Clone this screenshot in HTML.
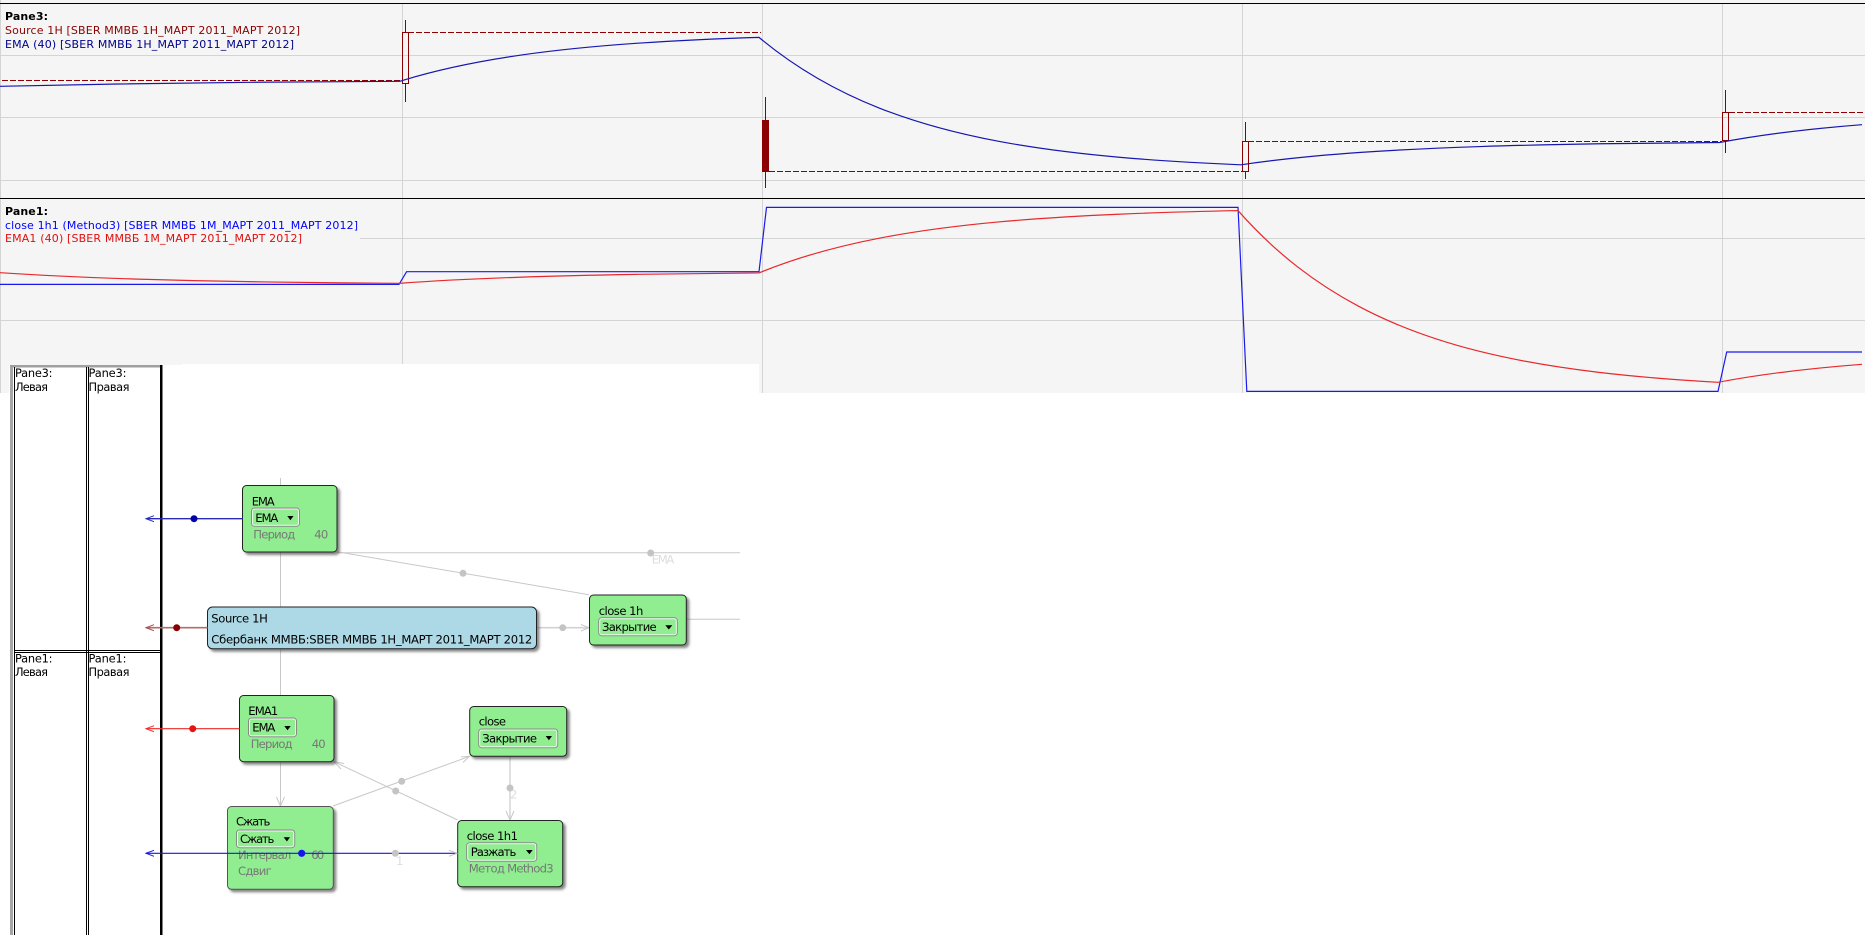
<!DOCTYPE html>
<html>
<head>
<meta charset="utf-8">
<title>Chart</title>
<style>
html,body{margin:0;padding:0;background:#fff;width:1865px;height:942px;overflow:hidden}
svg{display:block}
text{font-family:"DejaVu Sans","Liberation Sans",sans-serif;font-size:11px}
.n{font-size:11.6px;fill:#000}
.p{font-size:11.6px;fill:#777}
.l{font-size:11.6px;fill:#ddd}
.t{font-size:11.4px;fill:#000}
.g{stroke:#d4d4d4;stroke-width:1;shape-rendering:crispEdges}
.c{stroke:#8b0000;stroke-width:1;fill:none;shape-rendering:crispEdges}
.d{stroke:#8b0000;stroke-width:1;stroke-dasharray:6 2;fill:none;shape-rendering:crispEdges}
.w{stroke:#c8c8c8;stroke-width:1;fill:none}
.k{stroke:#000;stroke-width:1;shape-rendering:crispEdges}
.node{fill:#90ee90;stroke:#222;stroke-width:1;filter:url(#s)}
.dd{fill:#90ee90;stroke:#888;stroke-width:1}
.di{fill:none;stroke:#f0f5f0;stroke-width:1}
</style>
</head>
<body>
<svg xmlns="http://www.w3.org/2000/svg" width="1865" height="942" viewBox="0 0 1865 942">
<defs>
<filter id="s" x="-10%" y="-10%" width="125%" height="125%">
<feDropShadow dx="2.5" dy="2.5" stdDeviation="1.3" flood-color="#444" flood-opacity="0.65"/>
</filter>
</defs>

<!-- chart background -->
<rect x="0" y="0" width="1865" height="393" fill="#f5f5f5"/>
<path class="g" d="M0.5 0V393"/>
<path class="g" d="M0 55.5H1865M0 117.5H1865M0 180.5H1865M360 238.5H1865M0 320.5H1865"/>
<path class="g" d="M402.5 4V364M762.5 4V393M1242.5 4V393M1722.5 4V393"/>
<rect x="0" y="3" width="1865" height="1" fill="#000"/>
<rect x="0" y="198" width="1865" height="1" fill="#000"/>

<!-- Pane3 candles -->
<path class="d" d="M2 80.5H402M408 32.5H761M769 171.5H1242M1248 141.5H1722M1729 112.5H1865"/>
<rect class="c" x="402.5" y="32.5" width="6" height="51"/>
<path class="c" d="M405.5 20V32M405.5 84V102"/>
<rect x="762" y="120" width="7" height="52" fill="#8b0000"/>
<path class="c" d="M765.5 97V120M765.5 172V188"/>
<rect class="c" x="1242.5" y="141.5" width="6" height="30"/>
<path class="c" d="M1245.5 122V141M1245.5 172V179"/>
<rect class="c" x="1722.5" y="112.5" width="6" height="28"/>
<path class="c" d="M1725.5 90V112M1725.5 141V153"/>

<!-- Pane3 EMA -->
<path fill="none" stroke="#1717b0" stroke-width="1.2" d="M0 86.3L118 84L250 82.3L400 81.3L403 80.3
C441.7 68.45 481.3 60.76 521 55.07C560.7 49.38 600.3 45.75 640 43.06C679.7 40.37 719.3 38.65 759 37.38
C799.2 70.92 839.3 92.31 879.5 108.15C919.7 123.99 959.8 134.09 1000 141.57C1040.2 149.05 1080.3 153.82 1120.5 157.36C1160.7 160.89 1200.8 163.15 1241 164.82
C1280.9 158.93 1320.8 155.18 1360.75 152.4C1400.7 149.63 1440.6 147.85 1480.5 146.54C1520.4 145.23 1560.3 144.4 1600.25 143.78C1640.2 143.16 1680.1 142.76 1720 142.47
C1767.3 133.5 1814.7 128.36 1862 124.7"/>

<!-- Pane1 series -->
<path fill="none" stroke="#1a1aee" stroke-width="1.2" d="M0 284.4H399L406.6 271.7H759L766.5 207.4H1238L1246.8 391.4H1718L1726.7 352H1862"/>
<path fill="none" stroke="#e8282c" stroke-width="1.2" d="M0 272.7C44.3 275.67 88.7 277.57 133 278.98C177.3 280.38 221.7 281.27 266 281.94C310.3 282.6 354.7 283.04 399 283.35
C439 280.48 479 278.61 519 277.23C559 275.85 599 274.96 639 274.31C679 273.66 719 273.24 759 272.93
C798.9 256.5 838.8 246.04 878.75 238.29C918.7 230.54 958.6 225.6 998.5 221.94C1038.4 218.28 1078.3 215.95 1118.25 214.22C1158.2 212.49 1198.1 211.39 1238 210.57
C1278 255.77 1318 284.6 1358 305.94C1398 327.28 1438 340.89 1478 350.97C1518 361.05 1558 367.49 1598 372.25C1638 377.01 1678 380.05 1718 382.3
C1766 373.2 1814 368 1862 364.32"/>

<!-- legends -->
<text x="5" y="20" font-weight="bold" fill="#000" textLength="43">Pane3:</text>
<text x="5" y="34" fill="#8b0000" textLength="295">Source 1H [SBER ММВБ 1H_МАРТ 2011_МАРТ 2012]</text>
<text x="5" y="48" fill="#00008b" textLength="289">EMA (40) [SBER ММВБ 1H_МАРТ 2011_МАРТ 2012]</text>
<text x="5" y="215" font-weight="bold" fill="#000" textLength="43">Pane1:</text>
<text x="5" y="229" fill="#0000ff" textLength="353">close 1h1 (Method3) [SBER ММВБ 1M_МАРТ 2011_МАРТ 2012]</text>
<text x="5" y="242" fill="#e01010" textLength="297">EMA1 (40) [SBER ММВБ 1M_МАРТ 2011_МАРТ 2012]</text>

<!-- white diagram area -->
<rect x="9" y="365" width="750" height="29" fill="#fff"/>
<rect x="182" y="364" width="577" height="1" fill="#fff"/>

<!-- table -->
<rect x="10" y="365" width="3" height="570" fill="#a6a6a6"/>
<rect x="10" y="365" width="152" height="2.5" fill="#a0a0a0"/>
<path class="k" d="M14.5 367V935M86.5 367V935M88.5 367V935"/>
<path class="k" d="M14 650.5H162M14 652.5H162"/>
<rect x="160" y="365" width="2.5" height="570" fill="#000"/>
<text class="t" x="15" y="377" textLength="37.5">Pane3:</text>
<text class="t" x="15" y="391" textLength="33">Левая</text>
<text class="t" x="88.5" y="377" textLength="38">Pane3:</text>
<text class="t" x="88.5" y="391" textLength="41">Правая</text>
<text class="t" x="15" y="662.5" textLength="37.5">Pane1:</text>
<text class="t" x="15" y="676" textLength="33">Левая</text>
<text class="t" x="88.5" y="662.5" textLength="38">Pane1:</text>
<text class="t" x="88.5" y="676" textLength="41">Правая</text>

<!-- gray connections -->
<path class="w" d="M280.5 478V607M280.5 649V695M280.5 762V806"/>
<path class="w" d="M276.5 797L280.5 806L284.5 797"/>
<path class="w" d="M337 552.7H740"/>
<path class="w" d="M337 551.7L589 594.7"/>
<path d="M537 627.7H589" fill="none" stroke="#d2d2d2" stroke-width="1.6"/>
<path class="w" d="M581 624.5L589 627.7L581 631"/>
<path class="w" d="M686 619.3H740"/>
<path class="w" d="M333 806L469.7 756.3"/>
<path class="w" d="M461 757L469.7 756.3L463 762.5"/>
<path class="w" d="M457.7 820L334 761.7"/>
<path class="w" d="M344 763.5L334 761.7L341 769"/>
<path d="M510 756V820" fill="none" stroke="#d2d2d2" stroke-width="1.4"/>
<path class="w" d="M506 811L510 820L514 811"/>
<circle cx="650.7" cy="553" r="3.5" fill="#c4c4c4"/>
<circle cx="463" cy="573.3" r="3.5" fill="#c4c4c4"/>
<circle cx="562.7" cy="627.7" r="3.5" fill="#c4c4c4"/>
<circle cx="401.7" cy="781.3" r="3.5" fill="#c4c4c4"/>
<circle cx="395.7" cy="791" r="3.5" fill="#c4c4c4"/>
<circle cx="510" cy="788" r="3.5" fill="#c4c4c4"/>
<text class="l" x="651.7" y="563.7" textLength="22.6">EMA</text>
<text class="l" x="510" y="798.7">2</text>

<!-- EMA node -->
<rect class="node" x="242.5" y="485.5" width="94.5" height="66.5" rx="4"/>
<text class="n" x="251.7" y="505.3" textLength="23">EMA</text>
<rect class="dd" x="251.5" y="508" width="48" height="18.3" rx="3"/>
<rect class="di" x="252.5" y="509" width="46" height="16.3" rx="2"/>
<text class="n" x="255.3" y="522" textLength="23">EMA</text>
<path d="M287.3 516H293.5L290.4 520.2Z" fill="#000"/>
<text class="p" x="253.3" y="538.3" textLength="42">Период</text>
<text class="p" x="314.3" y="538.3" textLength="14">40</text>

<!-- Source node -->
<rect class="node" x="207.5" y="607" width="329" height="41.7" rx="5" style="fill:#add8e6"/>
<text class="n" x="211.3" y="622.3" textLength="56.5">Source 1H</text>
<text class="n" x="211.3" y="643.3" textLength="321">Сбербанк ММВБ:SBER ММВБ 1H_МАРТ 2011_МАРТ 2012</text>

<!-- close 1h node -->
<rect class="node" x="589.5" y="595" width="96.8" height="50" rx="4"/>
<text class="n" x="598.7" y="615" textLength="44.6">close 1h</text>
<rect class="dd" x="598.7" y="617.7" width="78.6" height="18" rx="3"/>
<rect class="di" x="599.7" y="618.7" width="76.6" height="16" rx="2"/>
<text class="n" x="602" y="631" textLength="54.7">Закрытие</text>
<path d="M665.3 625.3H672.3L668.8 629.5Z" fill="#000"/>

<!-- EMA1 node -->
<rect class="node" x="239.5" y="695.5" width="94.5" height="66.2" rx="4"/>
<text class="n" x="248.3" y="715" textLength="30">EMA1</text>
<rect class="dd" x="248.5" y="718" width="48" height="18.7" rx="3"/>
<rect class="di" x="249.5" y="719" width="46" height="16.7" rx="2"/>
<text class="n" x="252.3" y="731.7" textLength="23">EMA</text>
<path d="M284.3 726H290.7L287.5 730.2Z" fill="#000"/>
<text class="p" x="250.7" y="748" textLength="42">Период</text>
<text class="p" x="311.7" y="748" textLength="14">40</text>

<!-- Сжать node -->
<rect class="node" x="227.5" y="806.5" width="105.8" height="82.8" rx="4" style="stroke:#555"/>
<text class="n" x="236" y="825.7" textLength="34.3">Сжать</text>
<rect class="dd" x="236.5" y="830" width="58.2" height="17.7" rx="3"/>
<rect class="di" x="237.5" y="831" width="56.2" height="15.7" rx="2"/>
<text class="n" x="240" y="843" textLength="34.3">Сжать</text>
<path d="M283.7 837.3H290L286.9 841.5Z" fill="#000"/>
<text class="p" x="238" y="859" textLength="53.3">Интервал</text>
<text class="p" x="311.3" y="859" textLength="13">60</text>
<text class="p" x="238" y="875" textLength="33.7">Сдвиг</text>

<!-- close node -->
<rect class="node" x="469.7" y="706.5" width="97" height="49.8" rx="4"/>
<text class="n" x="478.7" y="725.7" textLength="27.3">close</text>
<rect class="dd" x="478.7" y="729" width="79" height="18.7" rx="3"/>
<rect class="di" x="479.7" y="730" width="77" height="16.7" rx="2"/>
<text class="n" x="482.3" y="742.3" textLength="54.7">Закрытие</text>
<path d="M545.7 736H552L548.9 740.2Z" fill="#000"/>

<!-- close 1h1 node -->
<rect class="node" x="457.7" y="820.5" width="105" height="66.2" rx="4"/>
<text class="n" x="466.7" y="840" textLength="51.3">close 1h1</text>
<rect class="dd" x="466.7" y="842.7" width="70" height="18.6" rx="3"/>
<rect class="di" x="467.7" y="843.7" width="68" height="16.6" rx="2"/>
<text class="n" x="470.7" y="856" textLength="45.6">Разжать</text>
<path d="M526 850H532.7L529.4 854.2Z" fill="#000"/>
<text class="p" x="468.7" y="872.7" textLength="85">Метод Method3</text>

<!-- coloured output lines -->
<path d="M146 518.7H242.5" stroke="#2a2ab8" stroke-width="1.3" fill="none"/>
<path d="M154 515.7L146 518.7L154 521.7" stroke="#2a2ab8" stroke-width="1" fill="none"/>
<circle cx="194" cy="518.7" r="3.5" fill="#0000a8"/>
<path d="M146 627.7H207.5" stroke="#b76a6a" stroke-width="1.6" fill="none"/>
<path d="M154 624.7L146 627.7L154 630.7" stroke="#a84a4a" stroke-width="1" fill="none"/>
<circle cx="176.7" cy="627.7" r="3.5" fill="#8b0000"/>
<path d="M146 728.7H239.5" stroke="#ee2a2a" stroke-width="1.2" fill="none"/>
<path d="M154 725.7L146 728.7L154 731.7" stroke="#ee2a2a" stroke-width="1" fill="none"/>
<circle cx="192.7" cy="728.7" r="3.5" fill="#e01515"/>
<path d="M146 853.3H457.7" stroke="#1515ee" stroke-width="1.1" fill="none"/>
<path d="M154 850.3L146 853.3L154 856.3" stroke="#1515ee" stroke-width="1" fill="none"/>
<circle cx="301.7" cy="853.3" r="3.6" fill="#1515ee"/>
<path d="M449 850.3L457 853.3L449 856.3" stroke="#c0c0c0" stroke-width="1" fill="none"/>
<circle cx="395.3" cy="853.3" r="3.5" fill="#c4c4c4"/>
<text class="l" x="396" y="865">1</text>
</svg>
</body>
</html>
